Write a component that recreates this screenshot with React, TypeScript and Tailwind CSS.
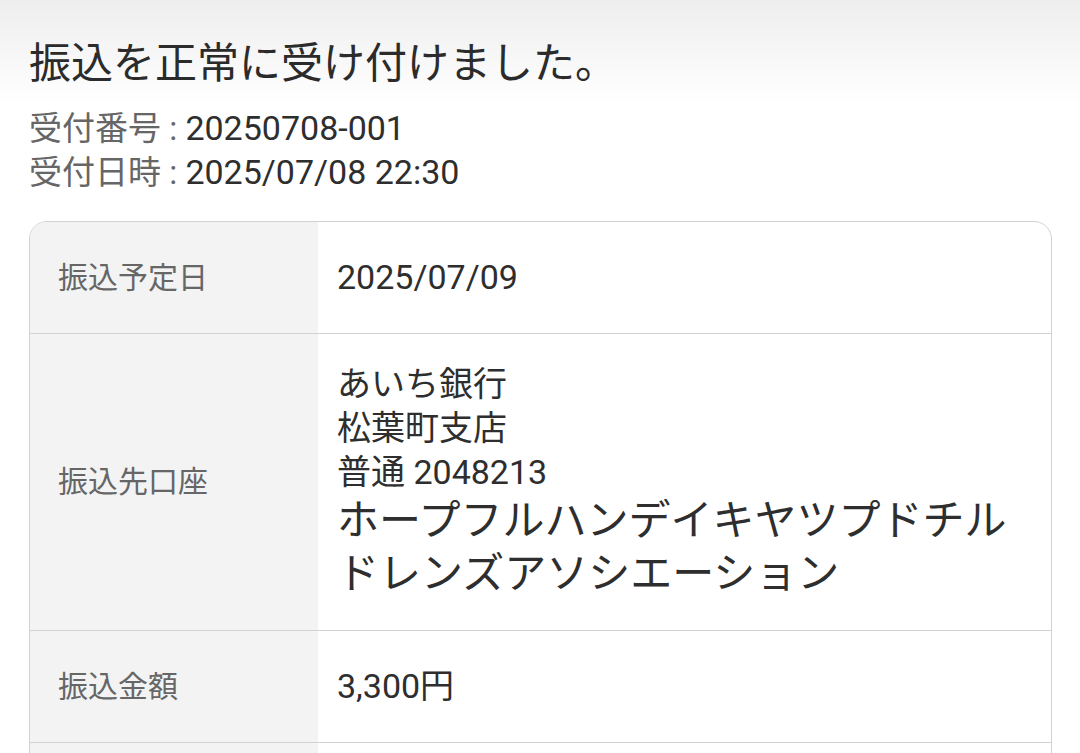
import React from "react";

const font = { fontFamily: 'Roboto, "Noto Sans CJK JP", sans-serif' };

function Row({ label, children, first }: { label: string; children: React.ReactNode; first?: boolean }) {
  return (
    <div className={`flex ${first ? "" : "border-t-[1.5px] border-[#d2d2d2]"}`}>
      <div className="w-[288px] shrink-0 bg-[#f3f3f3] flex items-center pl-[28px] text-[30px] leading-[40px] text-[#666]">
        {label}
      </div>
      <div className="flex-1 flex items-center pl-[19px] text-[#2e2e2e]">{children}</div>
    </div>
  );
}

export default function App() {
  return (
    <div style={font} className="h-[753px] overflow-hidden bg-gradient-to-b from-[#eeeeee] via-white via-[14%] to-white">
      <div className="px-[29px] pt-[40px]">
        <h1 className="text-[42px] leading-[48px] text-[#2b2b2b] font-normal">
          振込を正常に受け付けました。
        </h1>
        <div className="mt-[18px] text-[33px] leading-[44px]">
          <div className="h-[44px]">
            <span className="text-[#666]">受付番号 : </span>
            <span className="text-[#2e2e2e] text-[34px]">20250708-001</span>
          </div>
          <div className="h-[44px]">
            <span className="text-[#666]">受付日時 : </span>
            <span className="text-[#2e2e2e] text-[34px]">2025/07/08 22:30</span>
          </div>
        </div>
        <div className="mt-[27px] mr-[-1px] border-[1.5px] border-[#d2d2d2] rounded-t-[18px] overflow-hidden bg-white">
          <Row label="振込予定日" first>
            <div className="h-[111px] flex items-center text-[34px]">2025/07/09</div>
          </Row>
          <Row label="振込先口座">
            <div className="pt-[28px] pb-[30px]">
              <div className="text-[34px] leading-[44px]">あいち銀行</div>
              <div className="text-[34px] leading-[44px]">松葉町支店</div>
              <div className="text-[34px] leading-[44px]">普通 2048213</div>
              <div className="text-[42px] leading-[53px]">ホープフルハンデイキヤツプドチル</div>
              <div className="text-[42px] leading-[53px]">ドレンズアソシエーション</div>
            </div>
          </Row>
          <Row label="振込金額">
            <div className="h-[111px] flex items-center text-[34px]">3,300円</div>
          </Row>
          <Row label="">
            <div className="h-[111px]" />
          </Row>
        </div>
      </div>
    </div>
  );
}
